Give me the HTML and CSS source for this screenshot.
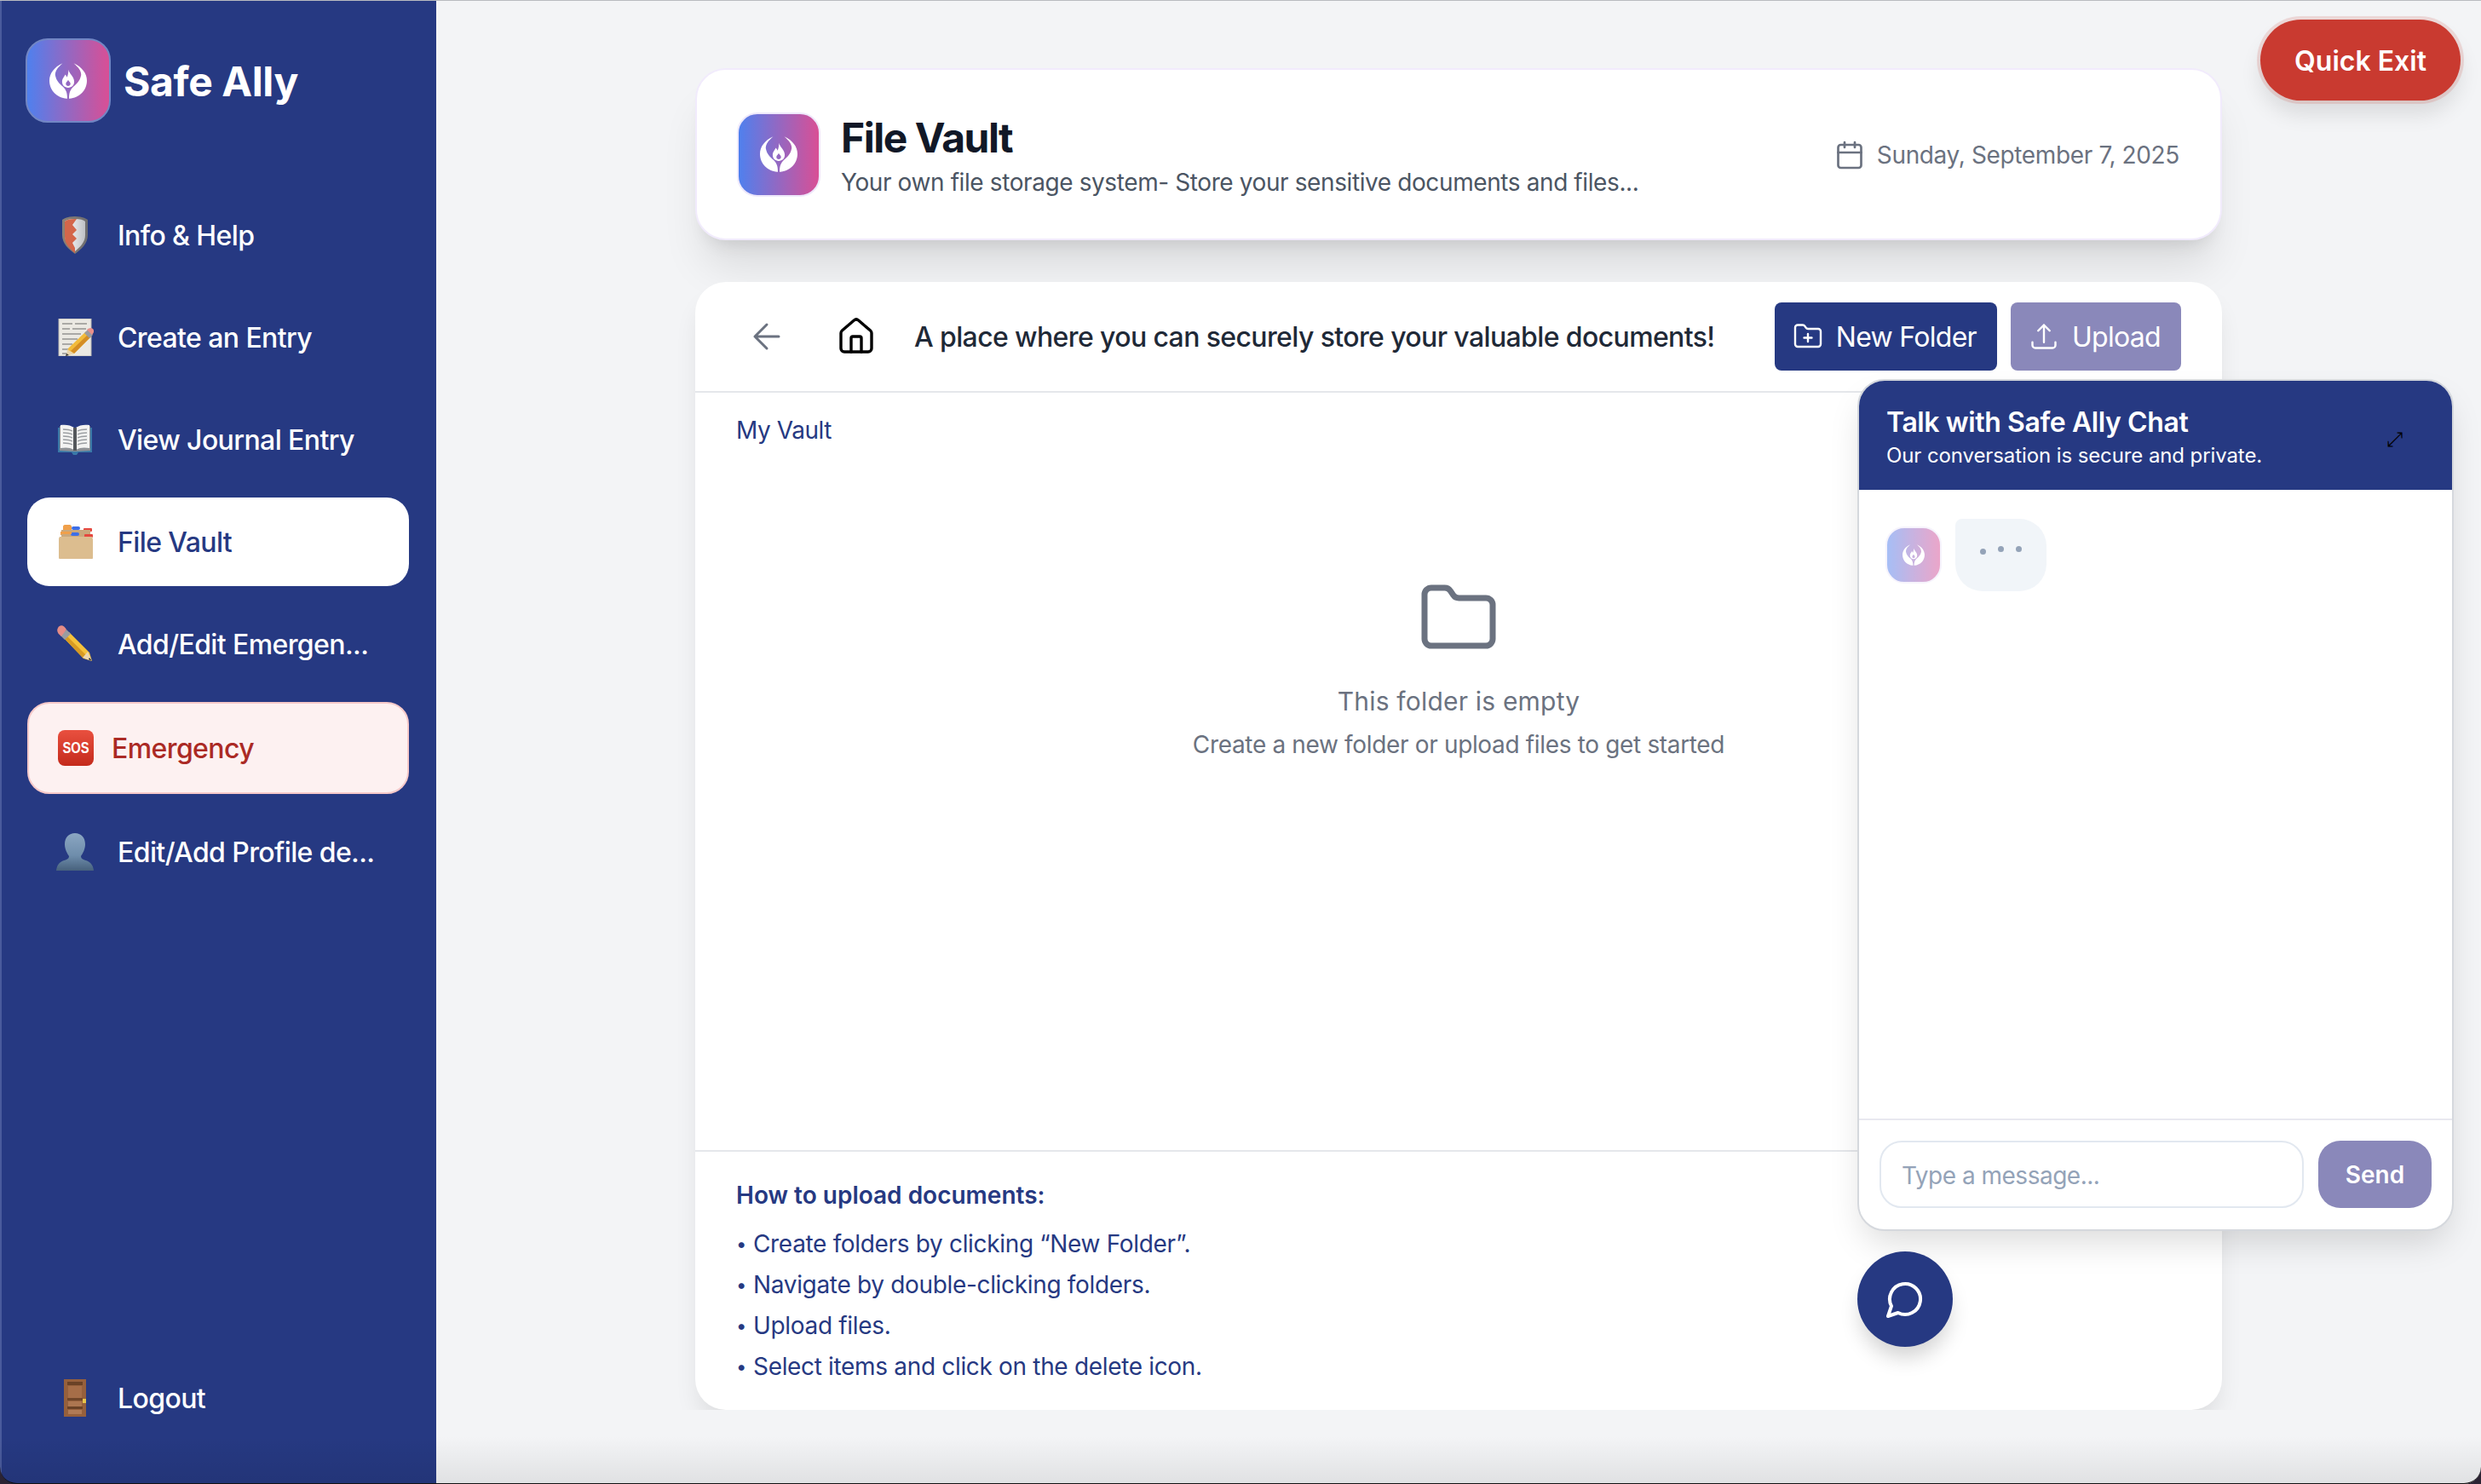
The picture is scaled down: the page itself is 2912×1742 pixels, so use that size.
FILE: index.html
```html
<!DOCTYPE html>
<html lang="en">
<head>
<meta charset="utf-8">
<title>Safe Ally - File Vault</title>
<link rel="stylesheet" href="styles.css">
</head>
<body>
<svg class="defs" width="0" height="0" aria-hidden="true">
  <defs>
    <symbol id="hands" viewBox="0 0 130 123">
      <path fill="#fff" fill-rule="evenodd" d="M46 0C17 13 0 35 0 60c0 35 27 60 60 63l2 0c0-18-3-30-16-42-9-8-22-18-26-40 0-9 3-14 5-18C30 14 38 7 46 0Z"/>
      <path fill="#fff" d="M84 0c29 13 46 35 46 60 0 35-27 60-60 63l-2 0c0-18 3-30 16-42 9-8 22-18 26-40 0-9-3-14-5-18C100 14 92 7 84 0Z"/>
      <path fill="#fff" fill-rule="evenodd" d="M66 22c2 14 20 24 20 42 0 13-9 21-21 21s-21-8-21-21c0-11 7-16 11-25 3 4 5 7 6 10 3-7 5-16 5-27Zm-1 36c-2 5-8 8-8 13 0 5 4 8 8 8s8-3 8-8c0-5-6-8-8-13Z"/>
    </symbol>
  </defs>
</svg>
<div class="app">
  <aside class="sidebar">
    <div class="brand">
      <div class="logo logo-lg"><svg class="hands-lg"><use href="#hands"/></svg></div>
      <span class="brand-name">Safe Ally</span>
    </div>
    <nav class="nav">
      <a class="nav-item">
        <span class="nav-icon">
          <svg width="44" height="44" viewBox="0 0 44 44">
            <defs><linearGradient id="sh" x1="0" x2="1"><stop offset="0" stop-color="#8b8276"/><stop offset="1" stop-color="#6d6d70"/></linearGradient><linearGradient id="si" x1="0" x2="1"><stop offset="0" stop-color="#ffffff"/><stop offset="1" stop-color="#bfc1c5"/></linearGradient></defs>
            <path fill="url(#sh)" d="M22 0c7 0 12 2 15 4v18c0 10-8 17-15 22C15 39 7 32 7 22V4c3-2 8-4 15-4Z"/>
            <path fill="url(#si)" d="M22 3c6 0 10 1 12 3v16c0 8-6 14-12 19C16 36 10 30 10 22V6c2-2 6-3 12-3Z"/>
            <path fill="#d4664a" d="M10 6c2-2 6-3 12-3h2l-5 7 5 6-5 5 5 5-5 5 3 6v6c-6-5-12-11-12-19Z"/>
          </svg>
        </span>
        <span>Info &amp; Help</span>
      </a>
      <a class="nav-item">
        <span class="nav-icon">
          <svg width="44" height="44" viewBox="0 0 44 44">
            <rect x="3" y="0" width="38" height="44" fill="#ebe9e3" stroke="#b9b7b2"/>
            <path stroke="#6a6a6a" stroke-width="1.2" fill="none" d="M7 6h12M22 6h14M7 12h9M19 12h16M7 18h22M7 24h18M7 30h12M7 36h9M7 41h7"/>
            <path fill="#f2bb3b" d="M14 35 35 15l6 6-20 20-8 2Z"/>
            <path fill="#d48d24" d="M17 38 38 18l3 3-20 20Z"/>
            <path fill="#e9d5ad" d="M13 36l8 5-9 3Z"/>
            <path fill="#33302d" d="M12 41l3 2-4 1Z"/>
            <path fill="#9a9ca0" d="M33 17l4-4 6 6-4 4Z"/>
            <path fill="#e8908b" d="M36 13c2-2 5-3 7-1s1 5-1 7Z"/>
          </svg>
        </span>
        <span>Create an Entry</span>
      </a>
      <a class="nav-item">
        <span class="nav-icon">
          <svg width="44" height="36" viewBox="0 0 44 36">
            <path fill="#3a79a8" d="M2 4h40v29H26l-2 3h-4l-2-3H2Z"/>
            <path fill="#8f9296" d="M4 2 21 4l1 28-18-1Zm36 0L23 4l-1 28 18-1Z"/>
            <path fill="#f3f3f2" d="M5 1c6-1 12 0 16 3v26C16 27 11 27 5 28Zm34 0c-6-1-12 0-16 3v26c5-3 10-3 16-2Z"/>
            <path stroke="#9a9da1" stroke-width="1.3" fill="none" d="M8 6c4 0 7 0 11 2M8 10c4 0 7 0 11 2M8 14c4 0 7 0 11 2M8 18c4 0 7 0 11 2M8 22c4 0 7 0 11 2M36 6c-4 0-7 0-11 2M36 10c-4 0-7 0-11 2M36 14c-4 0-7 0-11 2M36 18c-4 0-7 0-11 2M36 22c-4 0-7 0-11 2"/>
            <path fill="#55585c" d="M20 4h4v27h-4Z"/>
          </svg>
        </span>
        <span>View Journal Entry</span>
      </a>
      <a class="nav-item active">
        <span class="nav-icon">
          <svg width="44" height="40" viewBox="0 0 44 40">
            <path fill="#f0a04b" d="M8 2c0-1 1-2 2-2h6c1 0 2 1 2 2v4H8ZM5 8h12v4H5Z"/>
            <rect x="18" y="2" width="10" height="4" rx="2" fill="#3d6fe8"/>
            <rect x="32" y="4" width="10" height="4" rx="1" fill="#e5473e"/>
            <path fill="#c9a87d" d="M6 6h34v8H6Z"/>
            <rect x="17" y="9" width="10" height="4" rx="2" fill="#3d6fe8"/>
            <rect x="33" y="11" width="10" height="4" rx="1" fill="#e5473e"/>
            <path fill="#f0a04b" d="M6 8h12v3H6Z"/>
            <path fill="#dcbd8f" d="M4 14h38l1 3v22c0 1-1 1-1 1H4c-1 0-1-1-1-1V16Z"/>
          </svg>
        </span>
        <span>File Vault</span>
      </a>
      <a class="nav-item">
        <span class="nav-icon">
          <svg width="44" height="44" viewBox="0 0 44 44">
            <path fill="#f5c23a" d="M9 15 15 8l24 24 3 10-10-3Z"/>
            <path fill="#d79a23" d="M12 12 36 36l-4 3L9 15Z"/>
            <path fill="#ecd8b0" d="m37 31 5 11-11-4Z"/>
            <path fill="#2c2a28" d="m39 38 3 4-4-2Z"/>
            <path fill="#9a9ca0" d="m5 12 7-7 5 5-7 7Z"/>
            <path fill="#e58c86" d="M6 13C2 10 0 7 2 3s7-4 10 2Z"/>
          </svg>
        </span>
        <span>Add/Edit Emergen...</span>
      </a>
      <a class="nav-item emergency">
        <span class="sos"><span class="sos-text">SOS</span></span>
        <span>Emergency</span>
      </a>
      <a class="nav-item">
        <span class="nav-icon">
          <svg width="44" height="44" viewBox="0 0 44 44">
            <defs><linearGradient id="bust" x1="0" x2="0" y1="0" y2="1"><stop offset="0" stop-color="#8ba6c2"/><stop offset=".6" stop-color="#6e8dab"/><stop offset="1" stop-color="#47617c"/></linearGradient></defs>
            <path fill="url(#bust)" d="M22 0c7 0 12 5 12 13 0 6-3 11-5 14 0 2 1 3 3 4 6 2 11 4 12 13H0c1-9 6-11 12-13 2-1 3-2 3-4-2-3-5-8-5-14C10 5 15 0 22 0Z"/>
          </svg>
        </span>
        <span>Edit/Add Profile de...</span>
      </a>
    </nav>
    <a class="nav-item logout">
      <span class="nav-icon">
        <svg width="26" height="44" viewBox="0 0 26 44">
          <rect width="26" height="44" fill="#96603c"/>
          <rect x="4" y="3" width="18" height="4" fill="#6a4226"/>
          <rect x="5" y="8" width="16" height="14" fill="#a66e48"/>
          <rect x="4" y="22" width="18" height="3" fill="#6f4629"/>
          <rect x="5" y="26" width="16" height="6" fill="#ad7650"/>
          <rect x="4" y="32" width="18" height="3" fill="#6a4226"/>
          <rect x="5" y="36" width="16" height="5" fill="#b07a55"/>
          <rect x="22" y="23" width="4" height="5" fill="#e6c34a"/>
        </svg>
      </span>
      <span>Logout</span>
    </a>
  </aside>

  <main class="main">
    <header class="page-head">
      <div class="logo logo-md"><svg class="hands-md"><use href="#hands"/></svg></div>
      <div class="page-titles">
        <h1>File Vault</h1>
        <p>Your own file storage system- Store your sensitive documents and files...</p>
      </div>
      <div class="date">
        <svg width="36" height="36" viewBox="0 0 24 24" fill="none" stroke="currentColor" stroke-width="1.8" stroke-linecap="round" stroke-linejoin="round"><path d="M8 2v4M16 2v4"/><rect x="3" y="4" width="18" height="18" rx="2"/><path d="M3 10h18"/></svg>
        <span>Sunday, September 7, 2025</span>
      </div>
    </header>

    <section class="vault">
      <div class="toolbar">
        <svg class="ico-back" width="48" height="48" viewBox="0 0 24 24" fill="none" stroke="currentColor" stroke-width="1.5" stroke-linecap="round" stroke-linejoin="round"><path d="M19 12H5M12 19l-7-7 7-7"/></svg>
        <svg class="ico-home" width="48" height="48" viewBox="0 0 24 24" fill="none" stroke="#000" stroke-width="1.7" stroke-linecap="round" stroke-linejoin="round"><path d="M3 10a2 2 0 0 1 .7-1.5l7-6a2 2 0 0 1 2.600 0l7 6A2 2 0 0 1 21 10v9a2 2 0 0 1-2 2H5a2 2 0 0 1-2-2Z"/><path d="M9 21v-8a1 1 0 0 1 1-1h4a1 1 0 0 1 1 1v8"/></svg>
        <span class="tagline">A place where you can securely store your valuable documents!</span>
        <div class="actions">
          <button class="btn btn-dark">
            <svg width="36" height="36" viewBox="0 0 24 24" fill="none" stroke="currentColor" stroke-width="1.6" stroke-linecap="round" stroke-linejoin="round"><path d="M12 10v6M9 13h6"/><path d="M20 20a2 2 0 0 0 2-2V8a2 2 0 0 0-2-2h-7.900a2 2 0 0 1-1.700-.9l-.8-1.200A2 2 0 0 0 7.900 3H4a2 2 0 0 0-2 2v13a2 2 0 0 0 2 2Z"/></svg>
            <span>New Folder</span>
          </button>
          <button class="btn btn-muted">
            <svg width="36" height="36" viewBox="0 0 24 24" fill="none" stroke="currentColor" stroke-width="1.6" stroke-linecap="round" stroke-linejoin="round"><path d="M3 16.500v2.250A2.250 2.250 0 0 0 5.250 21h13.500A2.250 2.250 0 0 0 21 18.750V16.500M16.500 7.500 12 3 7.500 7.500M12 3v13.500"/></svg>
            <span>Upload</span>
          </button>
        </div>
      </div>
      <div class="browser">
        <div class="crumb">My Vault</div>
        <div class="empty">
          <svg width="96" height="96" viewBox="0 0 24 24" fill="none" stroke="currentColor" stroke-width="1.75" stroke-linecap="round" stroke-linejoin="round"><path d="M20 20a2 2 0 0 0 2-2V8a2 2 0 0 0-2-2h-7.900a2 2 0 0 1-1.700-.9l-.8-1.200A2 2 0 0 0 7.900 3H4a2 2 0 0 0-2 2v13a2 2 0 0 0 2 2Z"/></svg>
          <div class="empty-title">This folder is empty</div>
          <div class="empty-sub">Create a new folder or upload files to get started</div>
        </div>
      </div>
      <div class="help">
        <h2>How to upload documents:</h2>
        <ul>
          <li>Create folders by clicking “New Folder”.</li>
          <li>Navigate by double-clicking folders.</li>
          <li>Upload files.</li>
          <li>Select items and click on the delete icon.</li>
        </ul>
      </div>
    </section>
  </main>

  <button class="quick-exit">Quick Exit</button>

  <section class="chat">
    <div class="chat-head">
      <div>
        <div class="chat-title">Talk with Safe Ally Chat</div>
        <div class="chat-sub">Our conversation is secure and private.</div>
      </div>
      <span class="chat-expand">⤢</span>
    </div>
    <div class="chat-body">
      <div class="chat-row">
        <div class="logo logo-sm"><svg class="hands-sm"><use href="#hands"/></svg></div>
        <div class="typing"><i></i><i></i><i></i></div>
      </div>
    </div>
    <div class="chat-foot">
      <input class="chat-input" type="text" placeholder="Type a message...">
      <button class="send">Send</button>
    </div>
  </section>

  <button class="fab" aria-label="Open chat">
    <svg width="48" height="48" viewBox="0 0 24 24" fill="none" stroke="#fff" stroke-width="2" stroke-linecap="round" stroke-linejoin="round"><path d="M7.900 20A9 9 0 1 0 4 16.100L2 22Z"/></svg>
  </button>

  <div class="window-shade"></div>
  <div class="window-frame"></div>
</div>
</body>
</html>
```

FILE: styles.css
```css
* { box-sizing: border-box; }
html, body { margin: 0; padding: 0; }
body {
  width: 2912px;
  height: 1742px;
  overflow: hidden;
  font-family: Inter, "Liberation Sans", sans-serif;
  background: #f3f4f6;
}
.defs { position: absolute; }
.app {
  position: relative;
  display: flex;
  width: 2912px;
  height: 1742px;
  overflow: hidden;
  background: #f3f4f6;
}

/* sidebar */
.sidebar {
  width: 512px;
  flex: none;
  display: flex;
  flex-direction: column;
  padding: 45px 32px 49px 30px;
  background: #263982;
  border-left: 2px solid #4a5b9c;
}
.brand { display: flex; align-items: center; gap: 15px; margin-left: -2px; height: 99px; }
.brand-name { color: #fff; font-size: 48px; font-weight: 700; line-height: 1; letter-spacing: -.4px; padding-top: 3px; }
.logo {
  display: flex;
  align-items: center;
  justify-content: center;
  flex: none;
  background: linear-gradient(90deg, #4f80ee, #d94f95);
}
.logo-lg { width: 100px; height: 99px; border-radius: 26px; border: 2px solid #7286c4; }
.logo-md { width: 98px; height: 99px; border-radius: 24px; border: 2px solid #eee8fb; }
.logo-sm { width: 66px; height: 67px; border-radius: 22px; opacity: .5; border: 2px solid #eee8fb; }
.hands-lg { width: 44px; height: 42px; }
.hands-md { width: 44px; height: 42px; }
.hands-sm { width: 26px; height: 25px; }

.nav { display: flex; flex-direction: column; gap: 16px; margin-top: 80px; }
.nav-item {
  display: flex;
  align-items: center;
  gap: 28px;
  height: 104px;
  padding-left: 34px;
  border-radius: 26px;
  color: #fff;
  font-size: 32px;
  font-weight: 500;
  letter-spacing: -.6px;
}
.nav-icon { width: 44px; display: flex; align-items: center; justify-content: center; flex: none; }
.nav-item.active { background: #fff; color: #263982; }
.nav-item.emergency {
  height: 108px;
  padding-left: 34px;
  gap: 21px;
  background: #fdf1f1;
  border: 2px solid #f6c9c9;
  color: #ab2a25;
}
.sos {
  width: 42px;
  height: 42px;
  flex: none;
  display: flex;
  align-items: center;
  justify-content: center;
  border-radius: 8px;
  background: linear-gradient(180deg, #e9503f, #c42a1c);
  color: #fff;
  font-family: "Liberation Sans", sans-serif;
  font-size: 18px;
  font-weight: 700;
  letter-spacing: 0;
}
.sos-text { display: block; transform: scaleX(.82); }
.logout { margin-top: auto; }

/* main */
.main {
  flex: 1;
  min-width: 0;
  display: flex;
  flex-direction: column;
  gap: 49px;
  padding: 80px 304px 87px;
}
.page-head {
  display: flex;
  align-items: center;
  height: 202px;
  flex: none;
  padding: 0 48px 0 47px;
  background: #fff;
  border: 2px solid #f1ebfc;
  border-radius: 36px;
  box-shadow: 0 40px 50px -10px rgba(0,0,0,.1), 0 16px 20px -12px rgba(0,0,0,.1);
}
.page-titles { margin-left: 24px; margin-top: 6px; }
.page-titles h1 { margin: 0; font-size: 48px; line-height: 56px; font-weight: 700; color: #111827; letter-spacing: -1.5px; }
.page-titles p { margin: 4px 0 0; font-size: 28px; line-height: 40px; color: #4b5563; letter-spacing: -.4px; }
.date { margin-left: auto; padding-top: 2px; display: flex; align-items: center; gap: 14px; color: #6b7280; font-size: 28px; letter-spacing: -.36px; }

.vault {
  flex: 1;
  min-height: 0;
  display: flex;
  flex-direction: column;
  background: #fff;
  border-radius: 36px;
  box-shadow: 0 20px 30px -6px rgba(0,0,0,.1);
  clip-path: inset(-60px -60px 0 -60px);
}
.toolbar {
  display: flex;
  align-items: center;
  height: 130px;
  flex: none;
  padding: 0 48px 0 60px;
  border-bottom: 2px solid #e5e7eb;
}
.ico-back { color: #6b7280; flex: none; }
.ico-home { margin-left: 57px; flex: none; }
.tagline { margin-left: 44px; font-size: 32px; font-weight: 500; color: #1f2937; white-space: nowrap; letter-spacing: -.62px; }
.actions { margin-left: auto; display: flex; gap: 16px; }
.btn {
  display: flex;
  align-items: center;
  gap: 15px;
  height: 80px;
  padding: 0 24px 0 21px;
  border: 0;
  border-radius: 8px;
  color: #fff;
  font: 400 32px Inter, sans-serif;
  letter-spacing: -.7px;
}
.btn-dark { background: #263982; }
.btn-muted { background: #8a88ba; }
.browser { flex: 1; min-height: 0; padding: 24px 48px 0 48px; }
.crumb { font-size: 28px; line-height: 40px; color: #263982; letter-spacing: -.45px; }
.empty { display: flex; flex-direction: column; align-items: center; color: #6b7280; margin-top: 153px; }
.empty-title { font-size: 30px; line-height: 44px; margin-top: 27px; letter-spacing: .2px; }
.empty-sub { font-size: 28px; line-height: 40px; margin-top: 9px; letter-spacing: -.34px; }
.help { flex: none; padding: 31px 48px 27px 48px; border-top: 2px solid #e5e7eb; color: #263982; }
.help h2 { margin: 0; font-size: 28px; line-height: 40px; font-weight: 600; }
.help ul { margin: 13px 0 0; padding: 0; list-style: none; }
.help li { height: 48px; font-size: 28px; line-height: 48px; letter-spacing: -.33px; }
.help li::before { content: "•"; display: inline-block; width: 20px; height: 48px; font-size: 22px; vertical-align: top; }

/* overlays */
.quick-exit {
  position: absolute;
  left: 2653px;
  top: 23px;
  width: 235px;
  height: 95px;
  padding: 2px 0 0;
  border: 0;
  border-radius: 48px;
  background: #c93a30;
  color: #fff;
  font: 600 32px Inter, sans-serif;
  box-shadow: 0 0 0 4px rgba(201,58,48,.15), 0 16px 24px rgba(0,0,0,.1);
}
.chat {
  position: absolute;
  left: 2180px;
  top: 445px;
  width: 700px;
  height: 1000px;
  display: flex;
  flex-direction: column;
  background: #fff;
  border: 2px solid #d5d8dd;
  border-radius: 32px;
  overflow: hidden;
  box-shadow: 0 20px 40px -8px rgba(0,0,0,.15);
}
.chat-head {
  flex: none;
  height: 128px;
  padding: 29px 32px 0 32px;
  display: flex;
  justify-content: space-between;
  background: #263982;
  color: #fff;
}
.chat-title { font-size: 32px; line-height: 40px; font-weight: 600; letter-spacing: -.4px; }
.chat-sub { font-size: 24px; line-height: 36px; margin-top: 1px; letter-spacing: -.1px; }
.chat-expand { color: #000; font-size: 24px; line-height: 1; margin: 28px 26px 0 0; font-family: "DejaVu Sans", sans-serif; }
.chat-body { flex: 1; min-height: 0; padding: 34px 31px; }
.chat-row { display: flex; align-items: center; gap: 16px; }
.typing {
  width: 107px;
  height: 85px;
  display: flex;
  align-items: flex-start;
  justify-content: center;
  gap: 14px;
  padding-top: 32px;
  background: #f1f5f9;
  border-radius: 8px 32px 32px 32px;
}
.typing i { width: 7px; height: 7px; border-radius: 50%; background: #94a3b8; }
.typing i:first-child { margin-top: 3px; }
.chat-foot {
  flex: none;
  display: flex;
  gap: 17px;
  padding: 24px 24px 25px;
  border-top: 2px solid #e8e8f0;
}
.chat-input {
  flex: 1;
  min-width: 0;
  height: 79px;
  padding: 2px 24px 0;
  border: 2px solid #e2e8f0;
  border-radius: 26px;
  background: #fff;
  font: 400 28px Inter, sans-serif;
  letter-spacing: -.5px;
  outline: none;
}
.chat-input::placeholder { color: #94a3b8; opacity: 1; }
.send {
  width: 133px;
  height: 79px;
  flex: none;
  border: 0;
  border-radius: 26px;
  background: #8a88ba;
  color: #fff;
  font: 600 28px Inter, sans-serif;
}
.fab {
  position: absolute;
  left: 2180px;
  top: 1469px;
  width: 112px;
  height: 112px;
  display: flex;
  align-items: center;
  justify-content: center;
  padding: 0;
  border: 0;
  border-radius: 50%;
  background: #263982;
  box-shadow: 0 16px 24px -4px rgba(0,0,0,.18);
}

/* desktop window chrome */
.window-shade {
  position: absolute;
  left: 0;
  right: 0;
  bottom: 0;
  height: 56px;
  pointer-events: none;
  background: linear-gradient(180deg, rgba(0,0,0,0), rgba(0,0,0,.08));
}
.window-frame {
  position: absolute;
  inset: 0;
  pointer-events: none;
  border-top: 1px solid #b9bbc0;
  border-bottom: 1px solid #111;
  border-radius: 0 0 20px 20px;
  box-shadow: 0 0 0 30px #2b2333;
}
```
